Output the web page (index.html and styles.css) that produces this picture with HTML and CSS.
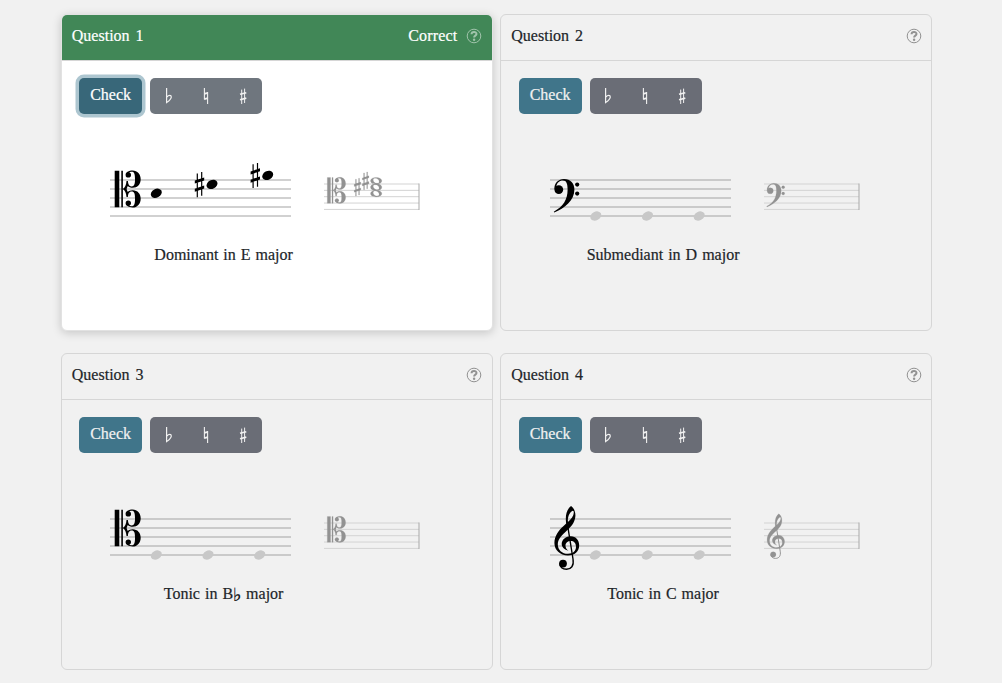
FILE: index.html
```
<!DOCTYPE html>
<html lang="en">
<head>
    <meta charset="UTF-8">
    <meta name="viewport" content="width=device-width, initial-scale=1.0">
    <title>Triads</title>
    <link rel="stylesheet" href="styles.css">
</head>
<body>

    <!-- Music symbols, origin is the clef's own line -->
    <svg class="defs" width="0" height="0">
        <symbol id="staff" overflow="visible">
            <path d="M0 0H181M0 9H181M0 18H181M0 27H181M0 36H181"/>
        </symbol>
        <g id="c-half">
            <path d="M12.8 0C15 -1.6 16.2 -4 16.5 -8H17.9C18.1 -5 19 -2.6 21.6 -2.6C24.4 -2.6 25 -5 25 -9.7C25 -14.6 24.4 -17.2 21.8 -17.2C20.6 -17.2 19.4 -16.7 19.2 -16.2L15.8 -14.6C16 -16.9 18.8 -18.5 22.6 -18.5C27.4 -18.5 30.7 -14.8 30.7 -9.7C30.7 -4.7 27.3 -1.2 22.8 -1.2C20.5 -1.2 18.8 -2 17.8 -3C17.2 -1.8 16.8 -.8 16.6 0Z"/>
            <circle cx="18.3" cy="-14.1" r="2.7"/>
        </g>
        <g id="c-clef">
            <path d="M4.7 -18.3H9.3V18.3H4.7ZM11.3 -18.3H12.9V18.3H11.3Z"/>
            <use href="#c-half"/>
            <use href="#c-half" transform="scale(1 -1)"/>
        </g>
        <g id="f-clef">
            <path d="M3.8 22.7C13.3 17.5 17.6 10.5 17.6 .8C17.6 -5.2 16.6 -8.5 12.8 -8.5C9.3 -8.5 6.8 -6 6.4 -2.5L4.4 .2C4.1 -5.7 8.3 -9.9 14 -9.9C20.6 -9.9 24.4 -5.6 24.4 .6C24.4 11.8 14.5 19.4 4.2 23.5Z"/>
            <circle cx="8.8" cy=".6" r="4.4"/>
            <circle cx="27.2" cy="-4.4" r="2.1"/>
            <circle cx="27.2" cy="4.6" r="2.1"/>
        </g>
        <g id="g-clef">
            <path fill-rule="evenodd" d="M21 -40C24 -38 25.6 -34 25.4 -30C25 -23 20.4 -18.6 15.4 -14.1C10.9 -10 7.8 -6.3 7.8 -1.8C7.8 4 12 7.8 18 7.8C23.3 7.8 26 5 26 .8C26 -3 23.8 -5 20.8 -5C17.7 -5 15.5 -3.1 15.5 -.5C15.5 1.8 16.5 3.4 18.5 4.7C14.6 4 11.7 1.2 11.7 -2C11.7 -6.6 16 -9.8 20.8 -9.8C26 -9.8 29.2 -5.5 29.2 -.8C29.2 5.5 24.5 9.4 18 9.4C10 9.4 4.4 4 4.4 -3C4.4 -10 8.8 -15.7 13.3 -19.8L16.2 -22.6C15 -30 16.5 -36.5 21 -40ZM22.8 -35.2C20 -34.4 17.5 -29.5 17.9 -24C21.2 -26.8 23.8 -30.4 23.8 -33.3C23.8 -34.6 23.5 -35.3 22.8 -35.2Z"/>
            <path class="stem" d="M17 -24.5L23 13C24.2 20 21 23.2 16.5 23.2C12.5 23.2 9.7 21 9.9 17.5"/>
            <circle cx="13" cy="17.6" r="3.9"/>
        </g>
        <g id="note">
            <ellipse rx="5.8" ry="4.3" transform="rotate(-28)"/>
        </g>
        <g id="whole">
            <path fill-rule="evenodd" d="M-8 0C-8 -3 -4.5 -4.8 0 -4.8S8 -3 8 0S4.5 4.8 0 4.8S-8 3 -8 0ZM-4.2 -1.2C-4.2 1.4 -1.8 3.5 1 3.5S4.2 2.4 4.2 1.2C4.2 -1.4 1.8 -3.5 -1 -3.5S-4.2 -2.6 -4.2 -1.2Z"/>
        </g>
        <g id="sharp">
            <path d="M-2.8 -11.2H-1.6V12.6H-2.8ZM1.6 -12.6H2.8V11.2H1.6ZM-4.7 -4L4.7 -7.2V-4.2L-4.7 -1ZM-4.7 4.2L4.7 1V4L-4.7 7.2Z"/>
        </g>
        <symbol id="btn-flat" viewBox="0 0 10 18">
            <path fill="none" stroke="currentColor" stroke-width="1.2" d="M2.6 1V15.6C5 13.8 7.3 12 7.3 9.9C7.3 8 4.8 7.9 2.8 10"/>
        </symbol>
        <symbol id="btn-natural" viewBox="0 0 10 18">
            <path fill="none" stroke="currentColor" stroke-width="1.1" d="M3.4 1V12.6M6.6 5V17"/>
            <path fill="none" stroke="currentColor" stroke-width="1.8" d="M3.3 6.8L6.8 5.8M3.3 12.2L6.8 11.2"/>
        </symbol>
        <symbol id="btn-sharp" viewBox="0 0 10 18">
            <path fill="none" stroke="currentColor" d="M3.7 2.6V17M6.6 1.6V16"/>
            <path fill="none" stroke="currentColor" stroke-width="1.7" d="M2 7.3L8.3 5.7M2 12.7L8.3 11.1"/>
        </symbol>
        <symbol id="help" viewBox="0 0 16 16">
            <circle cx="8" cy="8" r="6.8" fill="none" stroke="currentColor"/>
            <path fill="none" stroke="currentColor" stroke-width="2" d="M5.5 6.3C5.6 3.2 10.5 3.3 10.5 6C10.5 7.7 8.1 7.6 8.1 9.6"/>
            <circle cx="8.1" cy="11.7" r="1.2" fill="currentColor"/>
        </symbol>
    </svg>

    <main class="questions">
        <section class="card active">
            <header class="card-header correct">
                <span>Question 1</span>
                <span class="result">Correct</span>
                <svg class="help"><use href="#help"/></svg>
            </header>
            <div class="card-body">
                <div class="toolbar">
                    <button class="btn-check focused">Check</button>
                    <div class="btn-group">
                        <button><svg><use href="#btn-flat"/></svg></button>
                        <button><svg><use href="#btn-natural"/></svg></button>
                        <button><svg><use href="#btn-sharp"/></svg></button>
                    </div>
                </div>
                <div class="notation">
                    <svg class="score" viewBox="0 -30 182 90">
                        <use class="lines" href="#staff"/>
                        <use href="#c-clef" y="9"/>
                        <use href="#note" x="46.3" y="13.3"/>
                        <use href="#sharp" x="89.5" y="4.6"/>
                        <use href="#note" x="102" y="4.4"/>
                        <use href="#sharp" x="145.3" y="-4.5"/>
                        <use href="#note" x="157.7" y="-4.6"/>
                    </svg>
                    <svg class="score mini" viewBox="0 -34 97 90">
                        <path class="lines" d="M0 0H95M0 6.35H95M0 12.7H95M0 19.05H95M0 25.4H95"/>
                        <path class="barline" d="M95 -.5V26"/>
                        <g transform="scale(.705)">
                            <use href="#c-clef" y="9"/>
                            <use href="#sharp" x="47.5" y="4.5"/>
                            <use href="#sharp" x="59" y="-4.5"/>
                            <use href="#whole" x="74" y="-4.5"/>
                            <use href="#whole" x="74" y="4.5"/>
                            <use href="#whole" x="74" y="13.5"/>
                        </g>
                    </svg>
                </div>
                <p class="caption">Dominant in E major</p>
            </div>
        </section>

        <section class="card">
            <header class="card-header">
                <span>Question 2</span>
                <svg class="help"><use href="#help"/></svg>
            </header>
            <div class="card-body">
                <div class="toolbar">
                    <button class="btn-check">Check</button>
                    <div class="btn-group">
                        <button><svg><use href="#btn-flat"/></svg></button>
                        <button><svg><use href="#btn-natural"/></svg></button>
                        <button><svg><use href="#btn-sharp"/></svg></button>
                    </div>
                </div>
                <div class="notation">
                    <svg class="score" viewBox="0 -30 182 90">
                        <use class="lines" href="#staff"/>
                        <use href="#f-clef" y="9"/>
                        <g class="empty">
                            <use href="#note" x="45.8" y="36"/>
                            <use href="#note" x="97.5" y="36"/>
                            <use href="#note" x="149.2" y="36"/>
                        </g>
                    </svg>
                    <svg class="score mini" viewBox="0 -34 97 90">
                        <path class="lines" d="M0 0H95M0 6.35H95M0 12.7H95M0 19.05H95M0 25.4H95"/>
                        <path class="barline" d="M95 -.5V26"/>
                        <use href="#f-clef" y="9" transform="scale(.705)"/>
                    </svg>
                </div>
                <p class="caption">Submediant in D major</p>
            </div>
        </section>

        <section class="card">
            <header class="card-header">
                <span>Question 3</span>
                <svg class="help"><use href="#help"/></svg>
            </header>
            <div class="card-body">
                <div class="toolbar">
                    <button class="btn-check">Check</button>
                    <div class="btn-group">
                        <button><svg><use href="#btn-flat"/></svg></button>
                        <button><svg><use href="#btn-natural"/></svg></button>
                        <button><svg><use href="#btn-sharp"/></svg></button>
                    </div>
                </div>
                <div class="notation">
                    <svg class="score" viewBox="0 -30 182 90">
                        <use class="lines" href="#staff"/>
                        <use href="#c-clef" y="9"/>
                        <g class="empty">
                            <use href="#note" x="46.3" y="36"/>
                            <use href="#note" x="98" y="36"/>
                            <use href="#note" x="149.7" y="36"/>
                        </g>
                    </svg>
                    <svg class="score mini" viewBox="0 -34 97 90">
                        <path class="lines" d="M0 0H95M0 6.35H95M0 12.7H95M0 19.05H95M0 25.4H95"/>
                        <path class="barline" d="M95 -.5V26"/>
                        <use href="#c-clef" y="9" transform="scale(.705)"/>
                    </svg>
                </div>
                <p class="caption">Tonic in B<span class="flat">♭</span> major</p>
            </div>
        </section>

        <section class="card">
            <header class="card-header">
                <span>Question 4</span>
                <svg class="help"><use href="#help"/></svg>
            </header>
            <div class="card-body">
                <div class="toolbar">
                    <button class="btn-check">Check</button>
                    <div class="btn-group">
                        <button><svg><use href="#btn-flat"/></svg></button>
                        <button><svg><use href="#btn-natural"/></svg></button>
                        <button><svg><use href="#btn-sharp"/></svg></button>
                    </div>
                </div>
                <div class="notation">
                    <svg class="score" viewBox="0 -30 182 90">
                        <use class="lines" href="#staff"/>
                        <use href="#g-clef" y="27"/>
                        <g class="empty">
                            <use href="#note" x="45.3" y="36"/>
                            <use href="#note" x="97.2" y="36"/>
                            <use href="#note" x="149.2" y="36"/>
                        </g>
                    </svg>
                    <svg class="score mini" viewBox="0 -34 97 90">
                        <path class="lines" d="M0 0H95M0 6.35H95M0 12.7H95M0 19.05H95M0 25.4H95"/>
                        <path class="barline" d="M95 -.5V26"/>
                        <use href="#g-clef" y="27" transform="scale(.705)"/>
                    </svg>
                </div>
                <p class="caption">Tonic in C major</p>
            </div>
        </section>
    </main>

</body>
</html>
```
FILE: styles.css
```
* {
    box-sizing: border-box;
}
body {
    margin: 0;
    background-color: #f1f1f1;
    color: #212529;
    font-family: "Liberation Serif", serif;
    font-size: 16px;
    line-height: 24px;
    overflow: hidden;
    -webkit-text-stroke: 0.2px;
}
.defs {
    display: block;
}
.questions {
    display: grid;
    grid-template-columns: 432px 432px;
    column-gap: 7.5px;
    row-gap: 22px;
    padding: 14px 0 0 60.8px;
}
.card {
    height: 317px;
    border: 1px solid #d6d6d6;
    border-radius: 6px;
    overflow: hidden;
}
.card.active {
    border-color: #e2e2e2;
    background-color: #fff;
    box-shadow: 0 2px 10px rgba(0, 0, 0, 0.18);
}
.card-header {
    display: flex;
    align-items: center;
    height: 45.5px;
    padding: 0 9.5px 3px 10px;
    border-bottom: 1px solid #d6d6d6;
    word-spacing: 2px;
}
.card-header.correct {
    margin: -1px -1px 0;
    height: 46.5px;
    padding: 1px 10.5px 3px 11px;
    background-color: #418757;
    color: #fff;
}
.result {
    margin-left: auto;
    letter-spacing: 0.15px;
}
.help {
    width: 16px;
    height: 16px;
    margin-left: auto;
    color: #929292;
}
.result + .help {
    margin-left: 9px;
    color: #a0c3ab;
}
.card-body {
    padding: 17.5px 17.3px;
}
.toolbar {
    display: flex;
    gap: 8px;
}
button {
    margin: 0;
    padding: 0;
    border: none;
    background: none;
    color: #f1f1f1;
    font: inherit;
}
.btn-check {
    width: 63px;
    height: 35.5px;
    padding-bottom: 2px;
    border-radius: 5px;
    background-color: #40758a;
}
.btn-check.focused {
    background-color: #386779;
    color: #fff;
    box-shadow: 0 0 0 3.5px #adc6d0;
}
.btn-group {
    display: flex;
    width: 112px;
    height: 35.5px;
    padding-right: 1px;
    border-radius: 5px;
    background-color: #6a6d76;
}
.active .btn-group {
    background-color: #6f767e;
}
.btn-group button {
    display: flex;
    flex: 1;
    align-items: center;
    justify-content: center;
}
.btn-group svg {
    width: 10px;
    height: 18px;
}
.notation {
    display: flex;
    gap: 32px;
    margin: 36px 0 0 31px;
}
.score {
    width: 182px;
    height: 90px;
    overflow: visible;
}
.score.mini {
    width: 97px;
    fill: #929292;
    stroke: #929292;
    stroke-width: 0.25;
}
.lines {
    fill: none;
    stroke: #a3a3a3;
    stroke-width: 1.2;
}
.mini .lines {
    stroke: #d3d3d3;
    stroke-width: 1;
}
.barline {
    fill: none;
    stroke: #a9a9a9;
    stroke-width: 1;
}
.stem {
    fill: none;
    stroke: #000;
    stroke-width: 1.4;
}
.mini .stem,
.mini use {
    stroke: #929292;
}
/* the clef stem sits in a shared symbol, so it is coloured by the score */
.stem {
    stroke: var(--ink, #000);
}
.mini {
    --ink: #929292;
}
.empty {
    fill: #c8c8c8;
}
.caption {
    width: 289px;
    margin: 3px 0 0;
    text-align: center;
    word-spacing: 1px;
}
.flat {
    display: inline-block;
    width: 8px;
    font-family: "DejaVu Sans", sans-serif;
    font-size: 18px;
    line-height: 18px;
    vertical-align: -2px;
    color: #000;
}
```
